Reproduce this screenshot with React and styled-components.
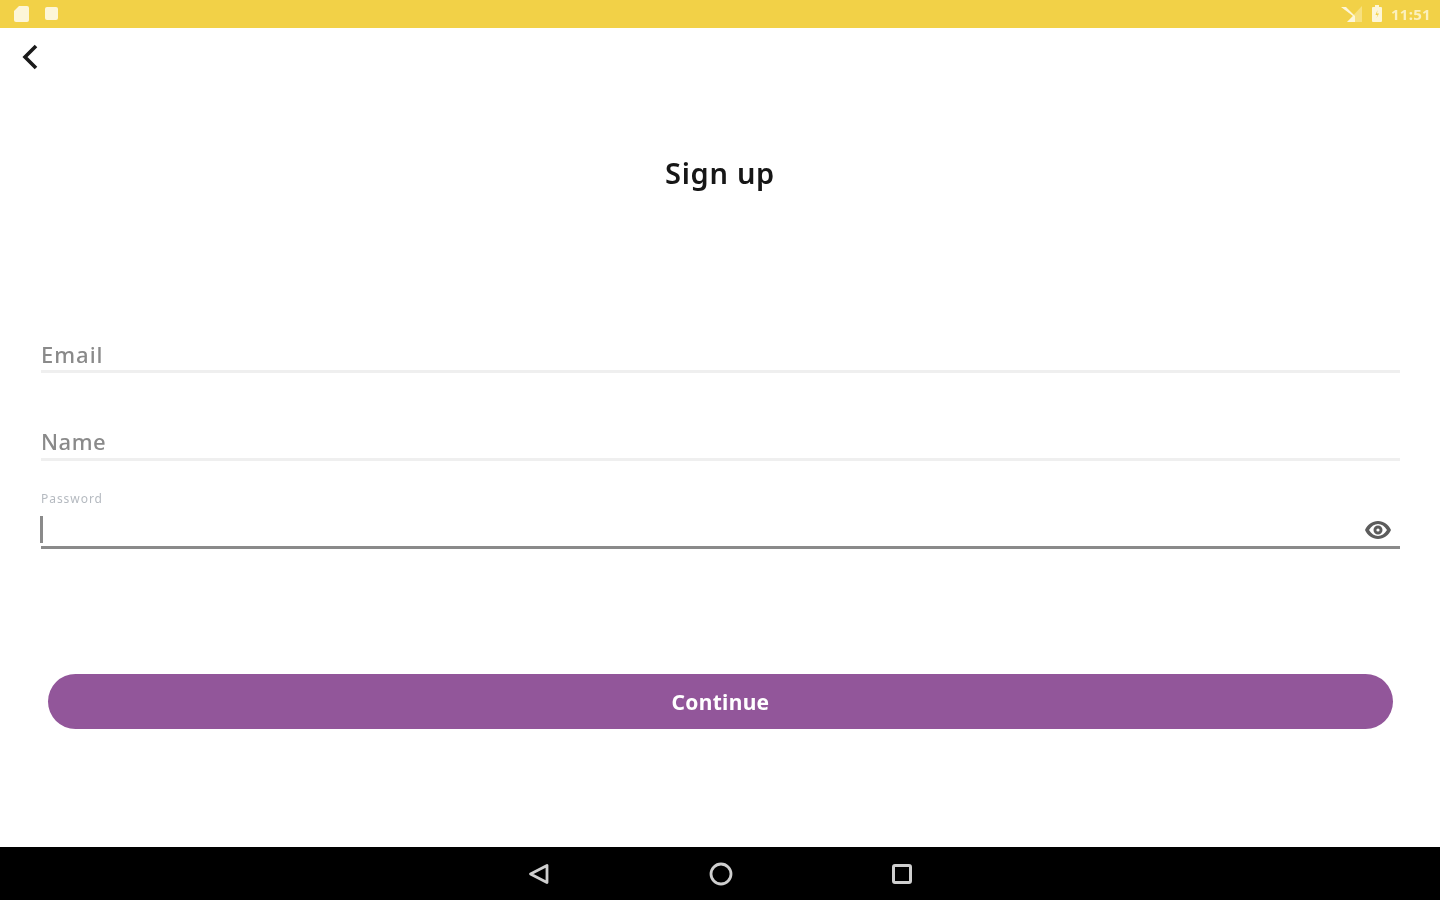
import React from "react"
import styled, { createGlobalStyle } from "styled-components"

const GlobalStyle = createGlobalStyle`
  html, body {
    margin: 0;
    padding: 0;
    background: #fff;
  }
  * {
    box-sizing: border-box;
  }
`

const Screen = styled.div`
  width: 1440px;
  height: 900px;
  display: flex;
  flex-direction: column;
  overflow: hidden;
  font-family: "Noto Sans", "Open Sans", sans-serif;
  filter: blur(0.7px);
`

const StatusBar = styled.div`
  height: 28px;
  flex: none;
  background: #f2d147;
  display: flex;
  align-items: center;
  justify-content: space-between;
  padding: 0 9px 1px 14px;
`

const StatusGroup = styled.div`
  display: flex;
  align-items: center;
  gap: ${(p) => p.$gap}px;
`

const StatusTime = styled.span`
  color: #fbf0bd;
  font-size: 15px;
  font-weight: 700;
  letter-spacing: 0.3px;
`

const Main = styled.main`
  flex: 1;
  display: flex;
  flex-direction: column;
  min-height: 0;
`

const BackButton = styled.button`
  width: 30px;
  height: 40px;
  margin: 9px 0 0 15px;
  padding: 0;
  border: 0;
  background: none;
  display: flex;
  align-items: center;
  justify-content: center;
`

const Title = styled.h1`
  margin: 74px 0 0;
  height: 44px;
  line-height: 44px;
  text-align: center;
  font-size: 29px;
  font-weight: 600;
  letter-spacing: 0.7px;
  color: #161616;
`

const Form = styled.form`
  margin-top: 90px;
  padding: 0 40px 0 41px;
  display: flex;
  flex-direction: column;
`

const Field = styled.div`
  height: 88px;
  display: flex;
  flex-direction: column;
  justify-content: flex-end;
  border-bottom: 3px solid ${(p) => (p.$active ? "#8a8a8a" : "#efefef")};
  position: relative;
`

const Placeholder = styled.div`
  height: 30px;
  line-height: 30px;
  margin-bottom: ${(p) => p.$lift}px;
  font-size: 22px;
  font-weight: 500;
  color: #8a8a8a;
  letter-spacing: ${(p) => p.$spacing}px;
`

const FloatingLabel = styled.div`
  font-size: 12px;
  line-height: 16px;
  color: #b5bac0;
  letter-spacing: 0.95px;
  margin-bottom: 9px;
`

const InputRow = styled.div`
  height: 30px;
  display: flex;
  align-items: flex-start;
  justify-content: space-between;
`

const Caret = styled.span`
  width: 3px;
  height: 27px;
  background: #8a8a8a;
  margin-left: -1px;
`

const EyeButton = styled.span`
  display: flex;
  margin: 5px 9px 0 0;
`

const ButtonWrap = styled.div`
  margin-top: 125px;
  padding: 0 47px 0 48px;
`

const ContinueButton = styled.button`
  width: 100%;
  height: 55px;
  border: 0;
  border-radius: 28px;
  background: #92569a;
  color: #fff;
  font-family: inherit;
  font-size: 21px;
  font-weight: 700;
  letter-spacing: 0.3px;
`

const NavBar = styled.nav`
  height: 53px;
  flex: none;
  background: #000;
  display: flex;
  align-items: center;
  justify-content: center;
  gap: 159px;
`

const SdIcon = () => (
  <svg width="15" height="16" viewBox="0 0 15 16">
    <path d="M5 0h8a2 2 0 0 1 2 2v12a2 2 0 0 1-2 2H2a2 2 0 0 1-2-2V5z" fill="#fdf6d8" />
  </svg>
)

const SquareIcon = () => (
  <svg width="13" height="13" viewBox="0 0 13 13">
    <rect width="13" height="13" rx="2" fill="#fdf6d8" />
  </svg>
)

const SignalIcon = () => (
  <svg width="22" height="16" viewBox="0 0 22 16">
    <path d="M21 0v16H6z" fill="#f7e07f" />
    <path d="M0 1h5l9 9v6H6l6-6z" fill="#fdf6d8" />
  </svg>
)

const BatteryIcon = () => (
  <svg width="10" height="17" viewBox="0 0 10 17">
    <path d="M3 0h4v2h2a1 1 0 0 1 1 1v13a1 1 0 0 1-1 1H1a1 1 0 0 1-1-1V3a1 1 0 0 1 1-1h2z" fill="#fdf6d8" />
    <path d="M5.500 5L3.500 10h2l-1 3 2.500-4.500H5z" fill="#f2d147" />
  </svg>
)

const BackIcon = () => (
  <svg width="16" height="26" viewBox="0 0 16 26" fill="none">
    <path d="M14 2L3 13l11 11" stroke="#1a1a1a" strokeWidth="3.600" />
  </svg>
)

const EyeIcon = () => (
  <svg width="26" height="18" viewBox="0 0 26 18">
    <path
      fillRule="evenodd"
      d="M13 0c5.800 0 10.500 3.700 13 9-2.500 5.300-7.200 9-13 9S2.500 14.300 0 9C2.500 3.700 7.200 0 13 0zm0 3C9.500 3 6.300 5.300 4 9c2.300 3.700 5.500 6 9 6s6.700-2.300 9-6c-2.300-3.700-5.500-6-9-6zM13 4.500a4.500 4.500 0 1 1 0 9 4.500 4.500 0 0 1 0-9z"
      fill="#5c5c5c"
    />
    <circle cx="13" cy="9" r="1.600" fill="#fff" />
  </svg>
)

const NavBack = () => (
  <svg width="22" height="22" viewBox="0 0 22 22" fill="none">
    <path d="M19 2.500v17L2.500 11z" stroke="#cfcfcf" strokeWidth="2.800" strokeLinejoin="round" />
  </svg>
)

const NavHome = () => (
  <svg width="24" height="24" viewBox="0 0 24 24" fill="none">
    <circle cx="12" cy="12" r="10" stroke="#cfcfcf" strokeWidth="2.800" />
  </svg>
)

const NavRecent = () => (
  <svg width="20" height="20" viewBox="0 0 20 20" fill="none">
    <rect x="1.500" y="1.500" width="17" height="17" rx="1.500" stroke="#cfcfcf" strokeWidth="3" />
  </svg>
)

export default function App() {
  return (
    <>
      <GlobalStyle />
      <Screen>
        <StatusBar>
          <StatusGroup $gap={16}>
            <SdIcon />
            <SquareIcon />
          </StatusGroup>
          <StatusGroup $gap={9}>
            <SignalIcon />
            <BatteryIcon />
            <StatusTime>11:51</StatusTime>
          </StatusGroup>
        </StatusBar>
        <Main>
          <BackButton aria-label="Back">
            <BackIcon />
          </BackButton>
          <Title>Sign up</Title>
          <Form>
            <Field>
              <Placeholder $spacing={1} $lift={1}>Email</Placeholder>
            </Field>
            <Field>
              <Placeholder $spacing={0.5} $lift={2}>Name</Placeholder>
            </Field>
            <Field $active>
              <FloatingLabel>Password</FloatingLabel>
              <InputRow>
                <Caret />
                <EyeButton>
                  <EyeIcon />
                </EyeButton>
              </InputRow>
            </Field>
          </Form>
          <ButtonWrap>
            <ContinueButton type="button">Continue</ContinueButton>
          </ButtonWrap>
        </Main>
        <NavBar>
          <NavBack />
          <NavHome />
          <NavRecent />
        </NavBar>
      </Screen>
    </>
  )
}
